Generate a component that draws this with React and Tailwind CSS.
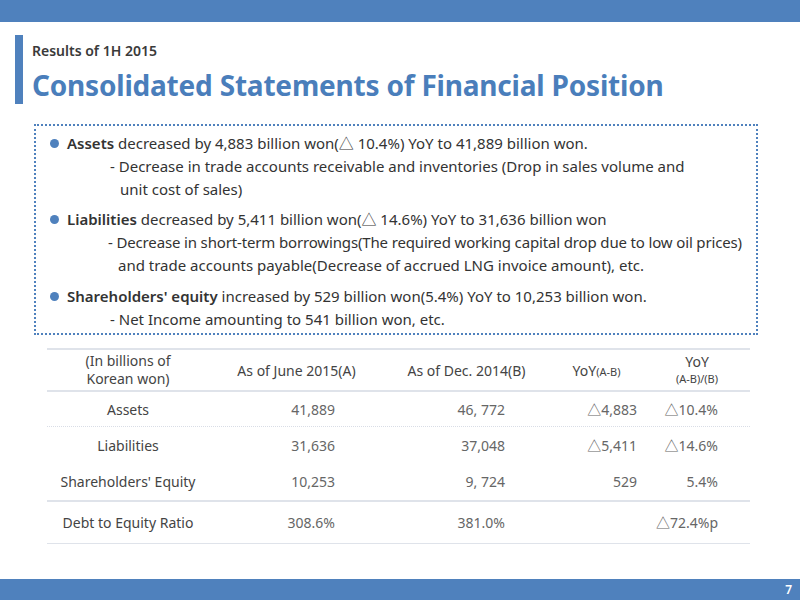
import React from 'react'

const FONT = { fontFamily: '"Noto Sans", "Noto Sans CJK KR", sans-serif' }

const ROWS = [
  { label: 'Assets', a: '41,889', b: '46, 772', d: '△4,883', p: '△10.4%', h: 'h-[35px]', line: 'border-b border-dotted border-[#d9dde6]' },
  { label: 'Liabilities', a: '31,636', b: '37,048', d: '△5,411', p: '△14.6%', h: 'h-[36px]', line: '' },
  { label: "Shareholders' Equity", a: '10,253', b: '9, 724', d: '529', p: '5.4%', h: 'h-[39px]', line: 'border-b-2 border-[#dfe3ea]' },
  { label: 'Debt to Equity Ratio', a: '308.6%', b: '381.0%', d: '', p: '△72.4%p', h: 'h-[42px]', line: 'border-b border-[#dfe3ea]' },
]

function Bullet({ children }) {
  return (
    <div className="flex items-center gap-[8px]">
      <span className="w-[9px] h-[9px] rounded-full bg-[#4f81bd] shrink-0" />
      <p>{children}</p>
    </div>
  )
}

export default function App() {
  return (
    <div className="w-[800px] h-[600px] bg-white flex flex-col text-[#333]" style={FONT}>
      <div className="h-[22px] bg-[#4f81bd] shrink-0" />

      {/* 제목 */}
      <div className="flex pl-[15px] mt-[13px] gap-[9px] shrink-0">
        <div className="w-[8px] h-[69px] bg-[#4f81bd]" />
        <div className="flex flex-col">
          <p className="text-[14px] font-semibold leading-[20px] mt-[6px] text-[#3a3a3a]">Results of 1H 2015</p>
          <h1 className="text-[28px] font-bold leading-[34px] mt-[7px] text-[#4a7ebb] tracking-[-0.2px]">
            Consolidated Statements of Financial Position
          </h1>
        </div>
      </div>

      {/* 요약 박스 */}
      <div className="mx-[34px] w-[724px] mt-[20px] h-[211px] shrink-0 border-2 border-dotted border-[#4f81bd] pl-[14px] pt-[6px] text-[15px] leading-[23px] whitespace-nowrap">
        <Bullet><b className="font-semibold">Assets</b> decreased by 4,883 billion won(△ 10.4%) YoY to 41,889 billion won.</Bullet>
        <p className="pl-[60px]">- Decrease in trade accounts receivable and inventories (Drop in sales volume and</p>
        <p className="pl-[70px]">unit cost of sales)</p>
        <div className="mt-[7px]">
          <Bullet><b className="font-semibold">Liabilities</b> decreased by 5,411 billion won(△ 14.6%) YoY to 31,636 billion won</Bullet>
        </div>
        <p className="pl-[58px] tracking-[-0.15px]">- Decrease in short-term borrowings(The required working capital drop due to low oil prices)</p>
        <p className="pl-[68px]">and trade accounts payable(Decrease of accrued LNG invoice amount), etc.</p>
        <div className="mt-[8px]">
          <Bullet><b className="font-semibold">Shareholders' equity</b> increased by 529 billion won(5.4%) YoY to 10,253 billion won.</Bullet>
        </div>
        <p className="pl-[60px]">- Net Income amounting to 541 billion won, etc.</p>
      </div>

      {/* 표 */}
      <div className="mx-[47px] w-[703px] mt-[13px] border-t-2 border-[#dfe3ea] text-[14px] shrink-0">
        <div className="flex items-center h-[42px] border-b-2 border-[#dfe3ea] text-[#444]">
          <div className="w-[162px] text-center leading-[18px]">
            <p>(In billions of</p>
            <p>Korean won)</p>
          </div>
          <div className="w-[175px] text-center">As of June 2015(A)</div>
          <div className="w-[165px] text-center">As of Dec. 2014(B)</div>
          <div className="w-[95px] text-center">YoY<span className="text-[11px]">(A-B)</span></div>
          <div className="w-[106px] text-center leading-[17px]">
            <p>YoY</p>
            <p className="text-[11px]">(A-B)/(B)</p>
          </div>
        </div>
        {ROWS.map((r) => (
          <div key={r.label} className={`flex items-center ${r.h} ${r.line}`}>
            <div className="w-[162px] text-center text-[#444]">{r.label}</div>
            <div className="w-[126px] text-right text-[#666]">{r.a}</div>
            <div className="w-[170px] text-right text-[#666]">{r.b}</div>
            <div className="w-[132px] text-right text-[#666]">{r.d}</div>
            <div className="w-[81px] text-right text-[#666]">{r.p}</div>
          </div>
        ))}
      </div>

      <div className="mt-auto h-[21px] bg-[#4f81bd] flex items-center justify-end pr-[8px]">
        <span className="text-white text-[12px] font-semibold">7</span>
      </div>
    </div>
  )
}
